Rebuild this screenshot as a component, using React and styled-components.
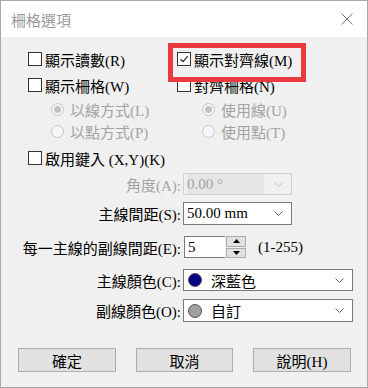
import React from 'react'
import styled, { createGlobalStyle } from 'styled-components'

const GlobalStyle = createGlobalStyle`
  html, body { margin: 0; padding: 0; background: #fff; }
  body {
    font-family: "Liberation Serif", "Noto Sans CJK TC", serif;
    font-size: 15px;
    color: #000;
  }
`

const Window = styled.div`
  width: 368px;
  height: 388px;
  box-sizing: border-box;
  border: 1px solid #a9a9a9;
  display: flex;
  flex-direction: column;
  background: #f0f0f0;
`

const TitleBar = styled.div`
  height: 36px;
  background: #fff;
  display: flex;
  align-items: center;
  justify-content: space-between;
  padding: 0 14px 0 10px;
  color: #9a9a9a;
  font-family: "Noto Sans CJK TC", sans-serif;
  font-size: 15px;
`

const Body = styled.div`
  flex: 1;
  display: flex;
  flex-direction: column;
  padding-top: 9px;
`

const CheckGrid = styled.div`
  display: grid;
  grid-template-columns: 149px 1fr;
  padding-left: 27px;
`

const Row = styled.div`
  height: ${p => p.$h || 26}px;
  margin-top: ${p => p.$mt || 0}px;
  display: flex;
  align-items: center;
  padding-left: ${p => p.$indent || 0}px;
  white-space: nowrap;
  color: ${p => (p.$disabled ? '#a3a3a3' : '#000')};
`

const Highlight = styled.div`
  position: relative;
  display: flex;
  align-items: center;
  &::after {
    content: '';
    position: absolute;
    left: -9px;
    top: -6px;
    width: 128px;
    height: 29px;
    border: 5px solid #ea3a3f;
    pointer-events: none;
  }
`

const Box = styled.span`
  width: 12px;
  height: 12px;
  border: 1px solid #333;
  background: #fff;
  margin-right: 3px;
  display: inline-flex;
  align-items: center;
  justify-content: center;
  flex: none;
`

const Radio = styled.span`
  width: 11px;
  height: 11px;
  border: 1px solid #c4c4c4;
  border-radius: 50%;
  background: #f6f6f6;
  margin-right: 6px;
  display: inline-flex;
  align-items: center;
  justify-content: center;
  flex: none;
  &::after {
    content: '';
    width: 7px;
    height: 7px;
    border-radius: 50%;
    background: ${p => (p.$on ? '#c2c2c2' : 'transparent')};
  }
`

const FormRow = styled.div`
  display: flex;
  align-items: center;
  margin-top: ${p => p.$mt || 0}px;
  height: ${p => p.$h || 22}px;
  white-space: nowrap;
`

const Label = styled.div`
  width: 180px;
  text-align: right;
  color: ${p => (p.$disabled ? '#a3a3a3' : '#000')};
  margin-right: 2px;
`

const Combo = styled.div`
  box-sizing: border-box;
  width: ${p => p.$w}px;
  height: 100%;
  border: 1px solid ${p => (p.$disabled ? '#cfcfcf' : '#7a7a7a')};
  background: ${p => (p.$disabled ? '#f0f0f0' : '#fff')};
  color: ${p => (p.$disabled ? '#a3a3a3' : '#000')};
  display: flex;
  align-items: center;
  padding-left: 3px;
`

const ComboText = styled.div`
  flex: 1;
  height: 100%;
  display: flex;
  align-items: center;
  background: ${p => (p.$disabled ? '#e6e6e6' : 'transparent')};
  margin-right: 1px;
`

const Chevron = styled.div`
  width: 26px;
  display: flex;
  align-items: center;
  justify-content: center;
  flex: none;
`

const Swatch = styled.span`
  width: 12px;
  height: 12px;
  border-radius: 50%;
  background: ${p => p.$color};
  border: 1px solid #555;
  margin: 0 9px 0 1px;
  flex: none;
`

const SpinInput = styled.div`
  box-sizing: border-box;
  width: 41px;
  height: 100%;
  margin-left: 1px;
  border: 1px solid #7a7a7a;
  border-right: none;
  background: #fff;
  display: flex;
  align-items: center;
  padding-left: 3px;
`

const SpinButtons = styled.div`
  width: 20px;
  height: 100%;
  display: flex;
  flex-direction: column;
  gap: 1px;
  margin-left: 1px;
`

const SpinBtn = styled.div`
  flex: 1;
  box-sizing: border-box;
  border: 1px solid #adadad;
  background: #e1e1e1;
  display: flex;
  align-items: center;
  justify-content: center;
`

const Range = styled.span`
  margin-left: 12px;
`

const ButtonRow = styled.div`
  display: flex;
  gap: 20px;
  padding-left: 17px;
  margin-top: 26px;
`

const Button = styled.div`
  box-sizing: border-box;
  width: ${p => p.$w || 98}px;
  height: 24px;
  border: 1px solid #adadad;
  background: #e1e1e1;
  display: flex;
  align-items: center;
  justify-content: center;
`

const Check = ({ checked, children }) => (
  <>
    <Box>
      {checked && (
        <svg width="10" height="10" viewBox="0 0 10 10">
          <path d="M1.5 5.2 L4 7.6 L8.8 2.2" fill="none" stroke="#222" strokeWidth="1.2" />
        </svg>
      )}
    </Box>
    {children}
  </>
)

const ChevronIcon = ({ color = '#666' }) => (
  <svg width="9" height="5" viewBox="0 0 9 5">
    <path d="M0.5 0.5 L4.5 4.5 L8.5 0.5" fill="none" stroke={color} strokeWidth="1" />
  </svg>
)

export default function App() {
  return (
    <Window>
      <GlobalStyle />
      <TitleBar>
        <span>柵格選項</span>
        <svg width="12" height="12" viewBox="0 0 12 12">
          <path d="M0.5 0.5 L11.5 11.5 M11.5 0.5 L0.5 11.5" stroke="#777" strokeWidth="1" />
        </svg>
      </TitleBar>
      <Body>
        <CheckGrid>
          <Row><Check>顯示讀數(R)</Check></Row>
          <Row>
            <Highlight><Check checked>顯示對齊線(M)</Check></Highlight>
          </Row>
          <Row><Check>顯示柵格(W)</Check></Row>
          <Row><Check>對齊柵格(N)</Check></Row>
          <Row $h={22} $indent={23} $disabled><Radio $on />以線方式(L)</Row>
          <Row $h={22} $indent={25} $disabled><Radio $on />使用線(U)</Row>
          <Row $h={22} $indent={23} $disabled><Radio />以點方式(P)</Row>
          <Row $h={22} $indent={25} $disabled><Radio />使用點(T)</Row>
          <Row $mt={3}><Check>啟用鍵入 (X,Y)(K)</Check></Row>
        </CheckGrid>

        <FormRow $mt={2}>
          <Label $disabled>角度(A):</Label>
          <Combo $w={109} $disabled>
            <ComboText $disabled>0.00 °</ComboText>
            <Chevron><ChevronIcon color="#c4c4c4" /></Chevron>
          </Combo>
        </FormRow>
        <FormRow $mt={7} $h={23}>
          <Label>主線間距(S):</Label>
          <Combo $w={109}>
            <ComboText>50.00 mm</ComboText>
            <Chevron><ChevronIcon /></Chevron>
          </Combo>
        </FormRow>
        <FormRow $mt={11}>
          <Label>每一主線的副線間距(E):</Label>
          <SpinInput>5</SpinInput>
          <SpinButtons>
            <SpinBtn>
              <svg width="7" height="4" viewBox="0 0 7 4"><path d="M0 4 L3.5 0 L7 4 Z" fill="#000" /></svg>
            </SpinBtn>
            <SpinBtn>
              <svg width="7" height="4" viewBox="0 0 7 4"><path d="M0 0 L3.5 4 L7 0 Z" fill="#000" /></svg>
            </SpinBtn>
          </SpinButtons>
          <Range>(1-255)</Range>
        </FormRow>
        <FormRow $mt={11}>
          <Label>主線顏色(C):</Label>
          <Combo $w={170}>
            <Swatch $color="#000080" />
            <ComboText>深藍色</ComboText>
            <Chevron><ChevronIcon /></Chevron>
          </Combo>
        </FormRow>
        <FormRow $mt={8} $h={23}>
          <Label>副線顏色(O):</Label>
          <Combo $w={170}>
            <Swatch $color="#a0a0a0" />
            <ComboText>自訂</ComboText>
            <Chevron><ChevronIcon /></Chevron>
          </Combo>
        </FormRow>

        <ButtonRow>
          <Button>確定</Button>
          <Button $w={97}>取消</Button>
          <Button>說明(H)</Button>
        </ButtonRow>
      </Body>
    </Window>
  )
}
